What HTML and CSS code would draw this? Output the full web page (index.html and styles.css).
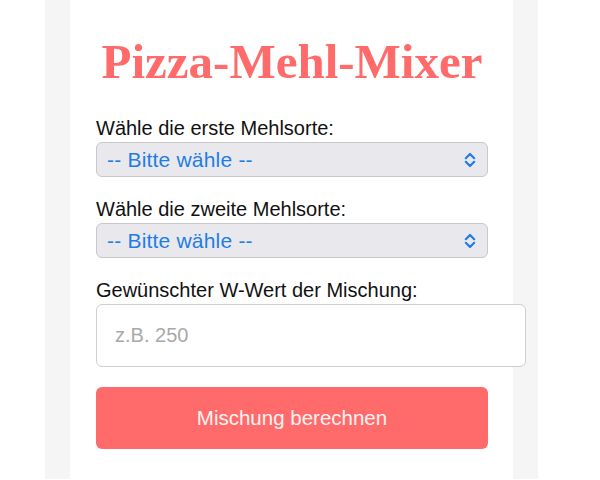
FILE: index.html
```html
<!DOCTYPE html>
<html lang="de">
<head>
    <meta charset="UTF-8">
    <meta name="viewport" content="width=device-width, initial-scale=1.0">
    <title>Pizza-Mehl-Mixer</title>
    <link rel="stylesheet" href="styles.css">
</head>
<body>

    <div class="container">
        <h1>Pizza-Mehl-Mixer</h1>

        <!-- Erste Mehlsorte -->
        <label for="mehl1">Wähle die erste Mehlsorte:</label>
        <div class="select-wrap">
            <select id="mehl1">
                <option value="">-- Bitte wähle --</option>
            </select>
            <svg class="chevron" width="12" height="16" viewBox="0 0 12 16">
                <path d="M1.8 6.2 L6 2 L10.2 6.2 M1.8 9.8 L6 14 L10.2 9.8" fill="none" stroke="#1f7de6" stroke-width="2.2" stroke-linecap="round" stroke-linejoin="round"/>
            </svg>
        </div>

        <!-- Zweite Mehlsorte -->
        <label for="mehl2">Wähle die zweite Mehlsorte:</label>
        <div class="select-wrap">
            <select id="mehl2">
                <option value="">-- Bitte wähle --</option>
            </select>
            <svg class="chevron" width="12" height="16" viewBox="0 0 12 16">
                <path d="M1.8 6.2 L6 2 L10.2 6.2 M1.8 9.8 L6 14 L10.2 9.8" fill="none" stroke="#1f7de6" stroke-width="2.2" stroke-linecap="round" stroke-linejoin="round"/>
            </svg>
        </div>

        <label for="wwert">Gewünschter W-Wert der Mischung:</label>
        <input type="number" id="wwert" class="input-number" placeholder="z.B. 250">

        <button class="calc-button">Mischung berechnen</button>
    </div>

</body>
</html>
```

FILE: styles.css
```css
html, body {
    margin: 0;
    padding: 0;
    background-color: #fff;
}

body {
    font-family: "Liberation Sans", Arial, sans-serif;
    font-size: 20px;
    color: #111;
}

.container {
    width: 392px;
    margin-left: 70px;
    padding: 34px 25px 30px 26px;
    background-color: #fff;
    box-shadow: 0 0 0 25px #f5f5f5; /* grauer Rand links und rechts */
}

h1 {
    margin: 0 0 28px;
    font-family: "Liberation Serif", "Times New Roman", serif;
    font-size: 49px;
    line-height: 55px;
    font-weight: bold;
    color: #ff6b6b;
    text-align: center;
}

label {
    display: block;
    margin-bottom: 2px;
}

.select-wrap {
    position: relative;
    margin-bottom: 21px;
}

select {
    display: block;
    width: 100%;
    box-sizing: border-box;
    height: 35px;
    padding: 0 30px 0 10px;
    font-family: inherit;
    font-size: 21px;
    letter-spacing: 0.2px;
    color: #1f7de6;
    background-color: #e9e9ed;
    border: 1px solid #c8c8cc;
    border-radius: 6px;
    appearance: none;
    -webkit-appearance: none;
    outline: none;
}

.chevron {
    position: absolute;
    right: 12px;
    top: 10px;
    pointer-events: none;
}

.input-number {
    display: block;
    width: 392px;
    padding: 19px 18px;
    margin: 0 0 20px;
    font-family: inherit;
    font-size: 20px;
    line-height: 23px;
    color: #111;
    border: 1px solid #cfcfcf;
    border-radius: 6px;
    appearance: textfield;
    -moz-appearance: textfield;
    outline: none;
}

.input-number::placeholder {
    color: #a9a9a9;
}

.calc-button {
    display: block;
    width: 100%;
    height: 62px;
    font-family: inherit;
    font-size: 20.5px;
    color: #fff3f3;
    background-color: #ff6b6b;
    border: none;
    border-radius: 6px;
    cursor: pointer;
}
```
